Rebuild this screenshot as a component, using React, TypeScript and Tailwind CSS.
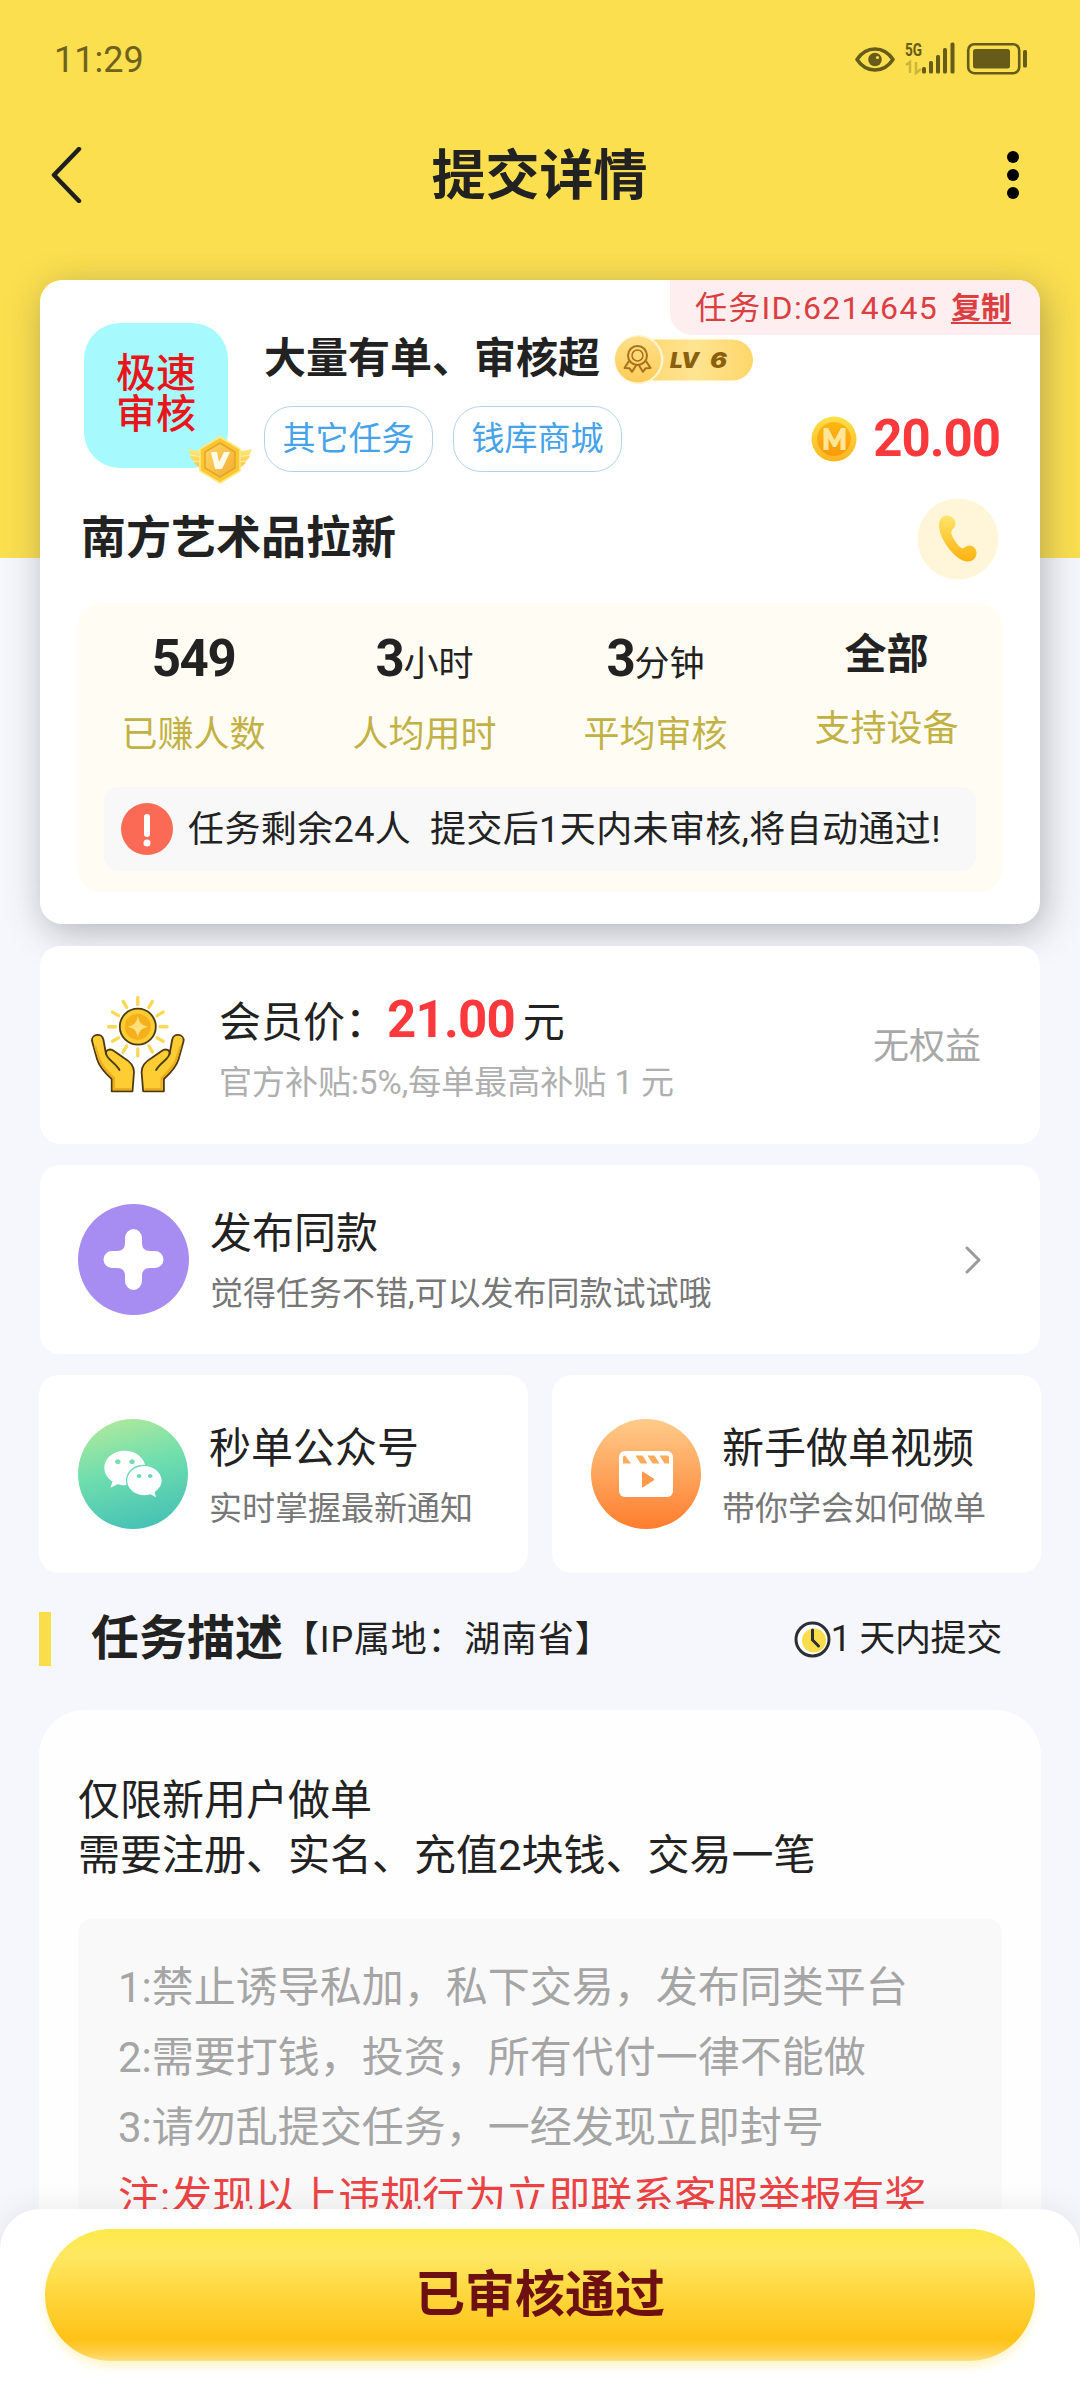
import type { ReactNode } from "react";
import { FaWeixin } from "react-icons/fa";

const stats = [
  { num: "549", unit: "", label: "已赚人数" },
  { num: "3", unit: "小时", label: "人均用时" },
  { num: "3", unit: "分钟", label: "平均审核" },
];

const rules = [
  "1:禁止诱导私加，私下交易，发布同类平台",
  "2:需要打钱，投资，所有代付一律不能做",
  "3:请勿乱提交任务，一经发现立即封号",
];

const rays = [0, 30, 60, 90, 120, 150, 180, 210, 240, 270, 300, 330];

function StatusIcons() {
  return (
    <svg width="176" height="40" viewBox="0 0 176 40" fill="none">
      {/* eye */}
      <path d="M4 20.500C9 13 15 10 22 10s13 3 18 10.500C35 28 29 31 22 31S9 28 4 20.500Z" stroke="#675b1a" strokeWidth="3.600" strokeLinejoin="round" />
      <circle cx="22" cy="20.500" r="6.800" fill="#675b1a" />
      <circle cx="24.500" cy="18.500" r="1.600" fill="#fbdf4f" />
      <text x="52" y="17" fontSize="19" fontWeight="700" fontFamily="Roboto, sans-serif" fill="#675b1a" textLength="17" lengthAdjust="spacingAndGlyphs">5G</text>
      <path d="M53 26l4-3v11M63 23v11l5-4" stroke="#cdb53a" strokeWidth="2.500" />
      {/* signal */}
      <g fill="#675b1a">
        <rect x="69" y="28" width="4" height="6.500" rx="1.500" />
        <rect x="76" y="22" width="4" height="12.500" rx="1.500" />
        <rect x="83" y="16" width="4" height="18.500" rx="1.500" />
        <rect x="90" y="9" width="4" height="25.500" rx="1.500" />
        <rect x="97.500" y="3.500" width="4" height="31" rx="1.500" />
      </g>
      {/* battery */}
      <rect x="115.200" y="5.200" width="51" height="29" rx="6" stroke="#675b1a" strokeWidth="2.600" />
      <rect x="120" y="10" width="37" height="19.500" rx="2.500" fill="#675b1a" />
      <rect x="170" y="11" width="4" height="17.500" rx="1.500" fill="#675b1a" />
    </svg>
  );
}

function VipBadge() {
  return (
    <svg className="absolute left-[103px] top-[112px]" width="66" height="50" viewBox="0 0 66 50">
      <defs>
        <linearGradient id="vipWing" x1="0" y1="0" x2="0" y2="1">
          <stop offset="0" stopColor="#ffe77a" />
          <stop offset="1" stopColor="#fbc02f" />
        </linearGradient>
        <linearGradient id="vipCore" x1="0" y1="0" x2="1" y2="1">
          <stop offset="0" stopColor="#ffd964" />
          <stop offset="1" stopColor="#f3ab30" />
        </linearGradient>
      </defs>
      <path d="M1 14c7 2 11 2 18 1v24l-7-5 1-1-6-5 1-1-5-5 1-1z" fill="url(#vipWing)" />
      <path d="M65 14c-7 2-11 2-18 1v24l7-5-1-1 6-5-1-1 5-5-1-1z" fill="url(#vipWing)" />
      <path d="M3 20l13 2M6 26l10 1M63 20l-13 2M60 26l-10 1" stroke="#fff1ad" strokeWidth="1" />
      <path d="M33 2l20 12v22L33 48 13 36V14z" fill="#fbc92f" stroke="#ffe88a" strokeWidth="1.500" strokeLinejoin="round" />
      <path d="M33 8l15 9v16l-15 9-15-9V17z" fill="url(#vipCore)" stroke="#e7a42c" strokeWidth="1.500" strokeLinejoin="round" />
      <path d="M24 17h6l2 10 5-10h6l-8 17h-7z" fill="#fffbe9" />
    </svg>
  );
}

function LevelBadge() {
  return (
    <svg className="ml-[14px] mt-px" width="142" height="50" viewBox="0 0 142 50">
      <defs>
        <linearGradient id="lvPill" x1="0" y1="0" x2="1" y2="0">
          <stop offset="0" stopColor="#ffd568" />
          <stop offset="0.500" stopColor="#ffe491" />
          <stop offset="1" stopColor="#ffd66a" />
        </linearGradient>
        <linearGradient id="lvDisc" x1="0" y1="0" x2="0" y2="1">
          <stop offset="0" stopColor="#ffe08a" />
          <stop offset="1" stopColor="#ffcc57" />
        </linearGradient>
      </defs>
      <rect x="20" y="4.500" width="119" height="41" rx="20.500" fill="url(#lvPill)" />
      <circle cx="25" cy="24.500" r="24.500" fill="#fff4cf" />
      <circle cx="24" cy="24.500" r="23" fill="url(#lvDisc)" />
      <g fill="none" stroke="#a8701c" strokeWidth="2" strokeLinejoin="round">
        <circle cx="23.500" cy="20.500" r="9.500" />
        <circle cx="23.500" cy="20.500" r="5.500" strokeWidth="1.500" />
        <path d="M15 26l-4.500 7 5 .3 2.600 3.500 4-6.500M32 26l4.500 7-5 .3-2.600 3.500-4-6.500" />
      </g>
      <g fontSize="21" fontWeight="900" fontStyle="italic" fontFamily="Inter, sans-serif" fill="#8a6010">
        <text x="56" y="33" textLength="29" lengthAdjust="spacingAndGlyphs">LV</text>
        <text x="96" y="33" textLength="17" lengthAdjust="spacingAndGlyphs">6</text>
      </g>
    </svg>
  );
}

function Coin() {
  return (
    <svg width="46" height="46" viewBox="0 0 46 46">
      <defs>
        <linearGradient id="coinRim" x1="0" y1="0" x2="0" y2="1">
          <stop offset="0" stopColor="#ffe04a" />
          <stop offset="1" stopColor="#fdb51f" />
        </linearGradient>
        <linearGradient id="coinFace" x1="0" y1="0" x2="0" y2="1">
          <stop offset="0" stopColor="#fdb813" />
          <stop offset="1" stopColor="#fb9a0c" />
        </linearGradient>
      </defs>
      <circle cx="23" cy="23" r="22.500" fill="url(#coinRim)" />
      <circle cx="23" cy="23" r="17" fill="url(#coinFace)" />
      <path d="M12.500 34V12h4.500l6.500 12L30 12h4.500v22H29.500V22.500L25 31h-3l-4.500-8.500V34z" fill="#ffe597" />
    </svg>
  );
}

function Phone() {
  return (
    <svg width="82" height="82" viewBox="0 0 82 82">
      <defs>
        <linearGradient id="phone" gradientUnits="userSpaceOnUse" x1="0" y1="16" x2="0" y2="64">
          <stop offset="0" stopColor="#fee66c" />
          <stop offset="1" stopColor="#fdb20e" />
        </linearGradient>
      </defs>
      <circle cx="41" cy="41" r="40.500" fill="#fff5d9" />
      <path
        d="M22 27C22 21.500 25.500 17.500 30 17.500c5 0 8.500 4 8.500 8.500 0 4-4.300 5-4.300 8.500 0 3.500 6.800 14 10.300 15.500 2.500 1 4.500-2.500 8-2.500 4 0 7 3.500 7 7.500 0 5-4 8.500-9 8.500C39.500 63.500 22 42 22 27Z"
        fill="url(#phone)"
      />
    </svg>
  );
}

function Hand() {
  return (
    <>
      <path
        d="M20.700 95.300V83C14 77 8 70 6 63L1 45c-.8-7 10-9 11.500-1l2.500 14c-1-4 4-6 8-3l10 7c7 4 10 8 10 14l-1.500 19.300z"
        fill="#fdcd33"
        stroke="#4c3a12"
        strokeWidth="1.800"
        strokeLinejoin="round"
      />
      <path d="M4 50l5 15c3 7 9 12 14 17v11h17" fill="none" stroke="#f0ab1d" strokeWidth="2.200" />
      <path d="M15 57c0 6 9 9 13.500 17" fill="none" stroke="#4c3a12" strokeWidth="1.800" strokeLinecap="round" />
    </>
  );
}

function HandsCoin() {
  return (
    <svg width="94" height="98" viewBox="0 0 94 98" className="shrink-0">
      {rays.map((deg) => (
        <path key={deg} d="M46.800 1.500v7" transform={`rotate(${deg} 46.800 30.700)`} stroke="#fbd957" strokeWidth="3.400" strokeLinecap="round" />
      ))}
      <circle cx="46.800" cy="30.700" r="18" fill="#fdcd33" stroke="#4c3a12" strokeWidth="1.800" />
      <circle cx="46.800" cy="30.700" r="13" fill="#f6b01c" />
      <path d="M46.800 20c1.500 7 3.500 9 10 10.700-6.500 1.700-8.500 3.700-10 10.700-1.500-7-3.500-9-10-10.700 6.500-1.700 8.500-3.700 10-10.700z" fill="#ffe07a" />
      <Hand />
      <g transform="translate(93.600 0) scale(-1 1)">
        <Hand />
      </g>
    </svg>
  );
}

function Clapper() {
  return (
    <svg width="54" height="46" viewBox="0 0 54 46">
      <rect width="54" height="46" rx="6" fill="#fff" />
      <path d="M4 6.500Q4 4.500 6 4.500l6 8H4zM16.500 4.500h7l5 8h-7zM28.500 4.500h7l5 8h-7zM40.500 4.500H48q2 0 2 2v6h-4.500z" fill="#ffab5c" />
      <path d="M23 21.500v14q0 1.500 1.500.6l10-6.600q1.200-1 0-2l-10-6.600q-1.500-.9-1.500.6z" fill="#ff9a4b" />
    </svg>
  );
}

function Entry({ icon, title, desc }: { icon: ReactNode; title: string; desc: string }) {
  return (
    <div className="flex items-center gap-[21px]">
      {icon}
      <div className="flex flex-col gap-2 pt-[5px]">
        <div className="text-[42px] leading-[56px]">{title}</div>
        <div className="text-[33px] leading-[48px] text-[#777]">{desc}</div>
      </div>
    </div>
  );
}

export default function App() {
  return (
    <div className="relative flex h-[2388px] w-[1080px] flex-col overflow-hidden bg-[linear-gradient(#fbdf4f_558px,#f6f7fc_558px)] font-[Roboto,'Noto_Sans_CJK_SC',sans-serif] text-[#222] *:shrink-0">
      <div className="flex h-[79px] items-end justify-between pl-[54px] pr-[51px]">
        <span className="text-[36px] leading-[38px] text-[#6f621d]">11:29</span>
        <StatusIcons />
      </div>

      <header className="flex h-[201px] items-center px-[50px] pb-[10px]">
        <svg width="40" height="56" viewBox="0 0 40 56" fill="none">
          <path d="M29 2L4 28l25 26" stroke="#1f1f1f" strokeWidth="4.500" strokeLinecap="round" strokeLinejoin="round" />
        </svg>
        <h1 className="flex-1 pr-[18px] pt-1 text-center text-[54px] font-bold leading-[72px]">提交详情</h1>
        <div className="mr-[10px] flex w-[13px] flex-col gap-[6px]">
          <i className="size-[12px] rounded-full bg-black" />
          <i className="size-[12px] rounded-full bg-black" />
          <i className="size-[12px] rounded-full bg-black" />
        </div>
      </header>

      <section className="mx-10 flex h-[644px] flex-col rounded-[22px] bg-white shadow-[4px_8px_36px_rgba(70,70,80,0.38)]">
        <div className="flex h-[55px] w-[370px] items-center self-end rounded-bl-[22px] rounded-tr-[22px] bg-[#ffeeef] pl-[25px] text-[32px] leading-[40px] text-[#dc3f42]">
          <span className="tracking-[1.300px]">任务ID:6214645</span>
          <b className="ml-[13px] text-[30px] leading-[40px] underline decoration-2 underline-offset-4">复制</b>
        </div>

        <div className="-mt-[12px] flex pl-[44px] pr-[40px]">
          <div className="relative h-[145px] w-[144px] shrink-0 rounded-[36px] bg-[#a6fafe]">
            <div className="pt-[30px] text-center text-[40px] font-medium leading-[41px] text-[#e8151a]">
              <p>极速</p>
              <p>审核</p>
            </div>
            <VipBadge />
          </div>
          <div className="ml-[36px] flex-1">
            <div className="mt-[11px] flex h-[50px] items-center">
              <h2 className="text-[42px] font-bold leading-[50px]">大量有单、审核超</h2>
              <LevelBadge />
            </div>
            <div className="mt-[22px] flex h-[66px] items-center">
              <span className="h-[66px] w-[169px] rounded-[28px] border border-[#b3d3e8] text-center text-[33px] leading-[64px] text-[#46a3ea]">其它任务</span>
              <span className="ml-5 h-[66px] w-[169px] rounded-[28px] border border-[#b3d3e8] text-center text-[33px] leading-[64px] text-[#46a3ea]">钱库商城</span>
              <div className="ml-auto flex items-center gap-[16px]">
                <Coin />
                <span className="text-[51px] font-bold leading-[60px] tracking-[-1px] text-[#fb383c]">20.00</span>
              </div>
            </div>
          </div>
        </div>

        <div className="mt-[24px] flex h-[86px] items-center justify-between pl-[41px] pr-[41px]">
          <h3 className="text-[45px] font-bold leading-[60px]">南方艺术品拉新</h3>
          <Phone />
        </div>

        <div className="mx-[38px] mt-[21px] h-[289px] rounded-[22px] bg-[#fffdf3]">
          <div className="grid h-[184px] grid-cols-4 pt-[25px] text-center">
            {stats.map((s) => (
              <div key={s.label}>
                <div className="flex h-[62px] items-baseline justify-center">
                  <b className="text-[51px] leading-[62px] tracking-[-1.500px]">{s.num}</b>
                  <span className="text-[35px]">{s.unit}</span>
                </div>
                <div className="mt-[20px] text-[36px] leading-[50px] text-[#c2b145]">{s.label}</div>
              </div>
            ))}
            <div>
              <div className="h-[56px] text-[42px] font-bold leading-[54px]">全部</div>
              <div className="mt-[20px] text-[36px] leading-[50px] text-[#c2b145]">支持设备</div>
            </div>
          </div>
          <div className="mx-[26px] flex h-[84px] items-center rounded-[14px] bg-[#f8f8f9] pl-[17px] text-[36px] leading-[50px]">
            <svg width="52" height="52" viewBox="0 0 52 52">
              <circle cx="26" cy="26" r="26" fill="#fb6a55" />
              <path d="M26 14v17" stroke="#fff" strokeWidth="6" strokeLinecap="round" />
              <circle cx="26" cy="40" r="3.500" fill="#fff" />
            </svg>
            <span className="ml-[15px] whitespace-pre pt-[2px] tracking-[0.400px]">任务剩余24人  提交后1天内未审核,将自动通过!</span>
          </div>
        </div>
      </section>

      <section className="mx-10 mt-[22px] flex h-[198px] items-center rounded-[20px] bg-white pl-[51px] pr-[59px]">
        <HandsCoin />
        <div className="ml-[34px] flex flex-col gap-[9px] pt-[6px]">
          <div className="flex h-[60px] items-baseline text-[42px]">
            <span>会员价：</span>
            <b className="text-[51px] leading-[60px] tracking-[-0.800px] text-[#fb383c]">21.00</b>
            <span className="ml-[8px]">元</span>
          </div>
          <div className="text-[33px] leading-[48px] text-[#afafaf]">官方补贴:5%,每单最高补贴 1 元</div>
        </div>
        <span className="ml-auto pt-[4px] text-[36px] leading-[50px] text-[#a8a8a8]">无权益</span>
      </section>

      <section className="mx-10 mt-[21px] flex h-[189px] items-center justify-between rounded-[20px] bg-white pl-[38px] pr-[58px]">
        <Entry
          icon={
            <svg width="111" height="111" viewBox="0 0 111 111">
              <circle cx="55.500" cy="55.500" r="55.500" fill="#a78df2" />
              <path
                d="M47 34a8.500 9 0 0 1 17 0v5q0 8 8 8h5a8.500 8.500 0 0 1 0 17h-5q-8 0-8 8v5a8.500 9 0 0 1-17 0v-5q0-8-8-8h-5a8.500 8.500 0 0 1 0-17h5q8 0 8-8z"
                fill="#fff"
              />
            </svg>
          }
          title="发布同款"
          desc="觉得任务不错,可以发布同款试试哦"
        />
        <svg width="18" height="28" viewBox="0 0 18 28" fill="none">
          <path d="M3 2l12 12L3 26" stroke="#9b9b9b" strokeWidth="3" strokeLinecap="round" strokeLinejoin="round" />
        </svg>
      </section>

      <div className="mx-[39px] mt-[21px] grid h-[198px] grid-cols-2 gap-6">
        <section className="flex items-center rounded-[20px] bg-white pl-[39px]">
          <Entry
            icon={
              <div className="flex size-[110px] items-center justify-center rounded-full bg-[linear-gradient(165deg,#b0e99c_5%,#6fdeae_45%,#43bfb5_95%)] text-white">
                <FaWeixin size={60} />
              </div>
            }
            title="秒单公众号"
            desc="实时掌握最新通知"
          />
        </section>
        <section className="flex items-center rounded-[20px] bg-white pl-[39px]">
          <Entry
            icon={
              <div className="flex size-[110px] items-center justify-center rounded-full bg-[linear-gradient(#ffcb8a,#ff7d2e)]">
                <Clapper />
              </div>
            }
            title="新手做单视频"
            desc="带你学会如何做单"
          />
        </section>
      </div>

      <div className="mx-[39px] mt-[39px] flex h-[54px] items-center">
        <div className="h-[54px] w-[12px] bg-[#fadd4b]" />
        <h2 className="ml-[40px] text-[48px] font-bold leading-[54px]">任务描述</h2>
        <span className="pt-[2px] text-[36px] leading-[54px] tracking-[0.800px]">【IP属地：湖南省】</span>
        <div className="ml-auto mr-[39px] flex items-center text-[36px] leading-[50px] tracking-[-0.300px]">
          <svg width="37" height="37" viewBox="0 0 37 37" fill="none">
            <circle cx="18.500" cy="18.500" r="16.500" fill="#fff" stroke="#2b2f33" strokeWidth="3" />
            <circle cx="20" cy="19.500" r="12" fill="#fadd4b" />
            <path d="M18.500 9v10l6 6" stroke="#2b2f33" strokeWidth="3" strokeLinecap="round" />
          </svg>
          1 天内提交
        </div>
      </div>

      <section className="mx-[39px] mt-[44px] h-[678px] rounded-t-[46px] bg-[#fefefe] px-[39px] pt-[63px]">
        <p className="text-[42px] leading-[55px]">
          仅限新用户做单
          <br />
          需要注册、实名、充值2块钱、交易一笔
        </p>
        <div className="mt-[36px] h-[500px] rounded-[14px] bg-[#f9f9f9] px-[40px] pt-[34px] text-[42px] leading-[70px] text-[#a5a5a5]">
          {rules.map((r) => (
            <p key={r}>{r}</p>
          ))}
          <p className="text-[#ee4345]">注:发现以上违规行为立即联系客服举报有奖</p>
        </div>
      </section>

      <footer className="absolute inset-x-0 bottom-0 h-[179px] rounded-t-[40px] bg-white px-[45px] pt-[20px] shadow-[0_-2px_30px_rgba(0,0,0,0.08)]">
        <button className="block h-[132px] w-full rounded-full bg-[linear-gradient(#fee94a_0%,#fee862_20%,#ffd336_55%,#ffc217_84%,#ffd04a_94%,#ffe07c_100%)] text-[50px] font-bold leading-[132px] text-[#6e1012] shadow-[0_6px_10px_rgba(255,225,110,0.35)]">
          已审核通过
        </button>
      </footer>
    </div>
  );
}
